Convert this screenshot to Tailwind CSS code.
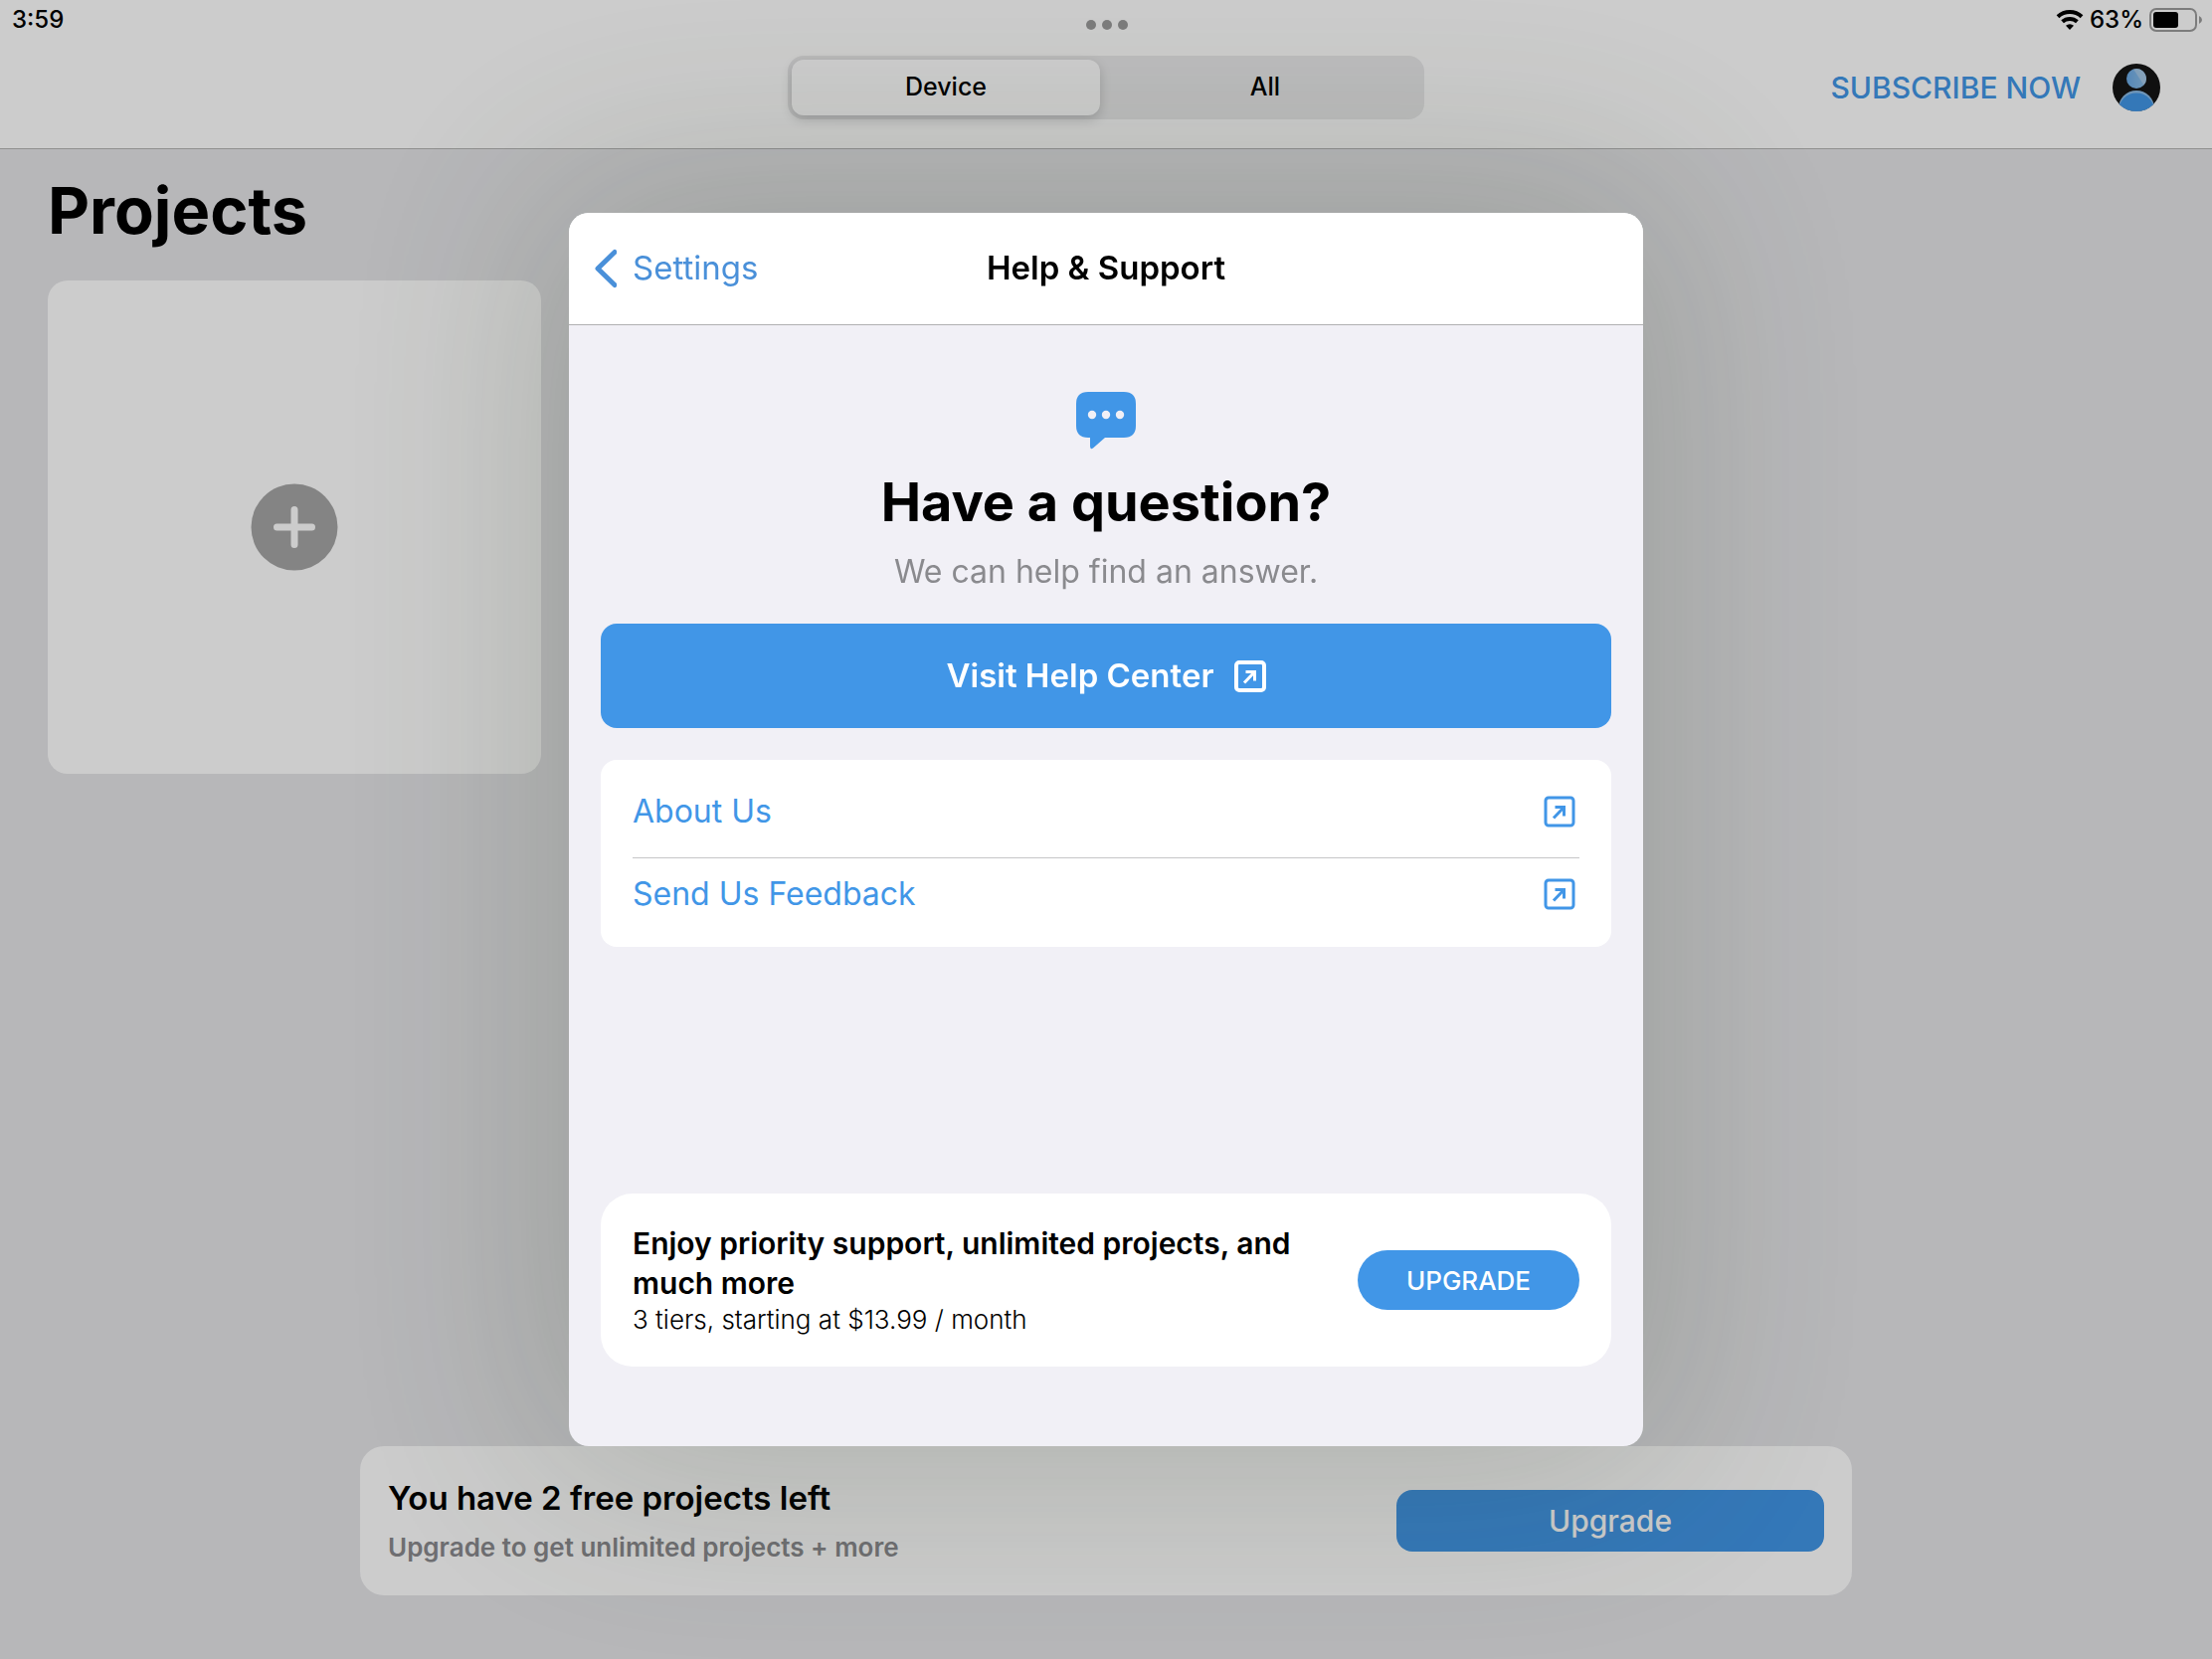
<!DOCTYPE html>
<html lang="en">
<head>
    <meta charset="UTF-8">
    <meta name="viewport" content="width=device-width, initial-scale=1.0">
    <title>Help &amp; Support</title>
    <script src="https://cdn.jsdelivr.net/npm/@tailwindcss/browser@4"></script>
</head>
<body class="min-h-screen flex flex-col bg-[#e5e5e8] text-black font-['Inter',sans-serif] antialiased">

    <!-- Top bar: status line and navigation -->
    <header class="bg-white border-b border-[#b4b4b4] pb-[29px]">
        <div class="grid grid-cols-3 items-center h-10 pl-3 pr-[10px] text-2xl font-medium">
            <span>3:59</span>
            <span class="flex justify-center gap-[6px] pt-[10px]">
                <i class="size-[10px] rounded-full bg-[#9c9c9c]"></i>
                <i class="size-[10px] rounded-full bg-[#9c9c9c]"></i>
                <i class="size-[10px] rounded-full bg-[#9c9c9c]"></i>
            </span>
            <span class="flex items-center justify-end gap-[6px]">
                <svg class="w-7 h-5" viewBox="0 0 28 20" fill="none" stroke="#000" stroke-width="4">
                    <path d="M2 6.8a17.5 17.5 0 0 1 24 0"/>
                    <path d="M6.600 11.800a11 11 0 0 1 14.800 0"/>
                    <path d="M14 20l-4-4.200a6 6 0 0 1 8 0z" fill="#000" stroke="none"/>
                </svg>
                <span>63%</span>
                <svg class="w-[53px] h-6" viewBox="0 0 53 24" fill="none">
                    <rect x="1" y="1" width="46" height="22" rx="6" stroke="#9c9c9c" stroke-width="2"/>
                    <rect x="4" y="4" width="25" height="16" rx="3" fill="#000"/>
                    <path d="M50 8q3 1.500 3 4t-3 4z" fill="#9c9c9c"/>
                </svg>
            </span>
        </div>
        <div class="grid grid-cols-[1fr_640px_1fr] items-center pt-4">
            <div class="col-start-2 grid grid-cols-2 h-16 p-1 rounded-2xl bg-[#ebebec] text-[25px]">
                <button class="mr-[6px] rounded-xl bg-white font-medium shadow-[0_4px_12px_rgba(0,0,0,0.18)]">Device</button>
                <button class="pl-1 font-medium">All</button>
            </div>
            <div class="flex items-center justify-end gap-8 pr-13">
                <a href="#" class="text-[30px] font-medium text-[#4196e7]">SUBSCRIBE NOW</a>
                <button aria-label="Account">
                    <svg class="size-12" viewBox="0 0 48 48">
                        <defs>
                            <clipPath id="avatar"><circle cx="24" cy="24" r="24"/></clipPath>
                            <linearGradient id="face" x1="0" y1="0" x2="1" y2="0">
                                <stop offset="0" stop-color="#6aaae6"/>
                                <stop offset="1" stop-color="#8fbfe8"/>
                            </linearGradient>
                        </defs>
                        <g clip-path="url(#avatar)">
                            <rect width="48" height="48" fill="#151515"/>
                            <circle cx="24" cy="45" r="18" fill="#8abbe6"/>
                            <circle cx="24" cy="47.500" r="18" fill="#4196e7"/>
                            <circle cx="24" cy="15" r="10" fill="url(#face)"/>
                            <path d="M21 5.500a10 10 0 0 1 10.500 16z" fill="#b0cfe8" opacity=".7"/>
                        </g>
                    </svg>
                </button>
            </div>
        </div>
    </header>

    <!-- Project list -->
    <main class="grow px-12 pt-[26px]">
        <h1 class="text-[65px] leading-[72px] font-bold">Projects</h1>
        <div class="mt-[34px] w-[496px]">
            <button class="w-full aspect-square rounded-[20px] bg-white flex items-center justify-center" aria-label="New project">
                <svg class="size-[88px]" viewBox="0 0 88 88">
                    <circle cx="44" cy="44" r="43.500" fill="#a6a6a6"/>
                    <path d="M44 26.500v35M26.500 44h35" stroke="#fff" stroke-width="7" stroke-linecap="round"/>
                </svg>
            </button>
        </div>
    </main>

    <!-- Free plan banner -->
    <footer class="px-12 pb-16">
        <div class="mx-auto max-w-[1500px] flex items-center justify-between rounded-3xl bg-white px-7 py-7">
            <div>
                <p class="text-[33px] leading-12 font-semibold">You have 2 free projects left</p>
                <p class="text-[26px] leading-10 font-semibold text-[#8a8a8e] pt-[6px]">Upgrade to get unlimited projects + more</p>
            </div>
            <button class="w-[430px] h-[62px] rounded-2xl bg-[#4196e7] text-white text-[30px] font-medium">Upgrade</button>
        </div>
    </footer>

    <!-- Dimmed backdrop with the help sheet -->
    <div class="fixed inset-0 flex items-center justify-center bg-black/20">
        <section role="dialog" aria-labelledby="sheet-title" class="w-full max-w-[1080px] min-h-[1240px] flex flex-col rounded-[20px] bg-[#f1f0f6] shadow-[0_0_220px_30px_rgba(50,65,40,0.2)]">
            <div class="grid grid-cols-[1fr_auto_1fr] items-center h-[113px] px-6 rounded-t-[20px] bg-white border-b border-[#b0b0b2] text-[33px]">
                <a href="#" class="flex items-center gap-4 text-[#4a90d9]">
                    <svg class="w-6 h-10" viewBox="0 0 24 40" fill="none" stroke="currentColor" stroke-width="5" stroke-linecap="round" stroke-linejoin="round"><path d="M22 3.500L5 20l17 16.500"/></svg>
                    Settings
                </a>
                <h2 id="sheet-title" class="font-semibold">Help &amp; Support</h2>
            </div>

            <div class="grow flex flex-col px-8 pb-20">
                <div class="flex flex-col items-center pt-[66px]">
                    <svg class="w-[60px] h-[60px]" viewBox="0 0 60 60">
                        <path d="M12 1h36q12 0 12 12v22q0 12-12 12H29L17 57.500q-3 2-3-2V47h-2Q0 47 0 35V13Q0 1 12 1z" fill="#4196e7"/>
                        <g fill="#f1f0f6"><circle cx="16" cy="24" r="4.200"/><circle cx="30" cy="24" r="4.200"/><circle cx="44" cy="24" r="4.200"/></g>
                    </svg>
                    <h3 class="pt-4 text-[54px] leading-[72px] font-bold">Have a question?</h3>
                    <p class="pt-[10px] text-[32px] leading-12 text-[#8a8a8e]">We can help find an answer.</p>
                </div>

                <a href="#" class="mt-7 h-[105px] flex items-center justify-center gap-5 rounded-2xl bg-[#4196e7] text-white text-[33px] font-semibold">
                    Visit Help Center
                    <svg class="size-8" viewBox="0 0 32 32" fill="none" stroke="currentColor" stroke-width="3"><rect x="2" y="2" width="28" height="28" rx="3" stroke-width="4"/><path d="M11.500 11.500h9v9M20.500 11.500l-10.500 11"/></svg>
                </a>

                <ul class="mt-8 px-8 pt-[6px] pb-[17px] rounded-2xl bg-white text-[32px] text-[#4196e7]">
                    <li class="border-b border-[#c6c6c8]">
                        <a href="#" class="h-[92px] flex items-center justify-between pr-1">About Us
                            <svg class="size-8" viewBox="0 0 32 32" fill="none" stroke="currentColor" stroke-width="3"><rect x="2" y="2" width="28" height="28" rx="3"/><path d="M11.500 11.500h9v9M20.500 11.500l-10.500 11"/></svg>
                        </a>
                    </li>
                    <li>
                        <a href="#" class="h-[72px] flex items-center justify-between pr-1">Send Us Feedback
                            <svg class="size-8" viewBox="0 0 32 32" fill="none" stroke="currentColor" stroke-width="3"><rect x="2" y="2" width="28" height="28" rx="3"/><path d="M11.500 11.500h9v9M20.500 11.500l-10.500 11"/></svg>
                        </a>
                    </li>
                </ul>

                <div class="mt-auto flex items-center justify-between gap-12 px-8 py-[30px] rounded-[32px] bg-white">
                    <div>
                        <p class="text-[30px] leading-10 font-semibold">Enjoy priority support, unlimited projects, and much more</p>
                        <p class="text-[26px] leading-[34px] font-light">3 tiers, starting at $13.99 / month</p>
                    </div>
                    <button class="w-[223px] h-[60px] shrink-0 rounded-full bg-[#4196e7] text-white text-[26px] font-medium">UPGRADE</button>
                </div>
            </div>
        </section>
    </div>

</body>
</html>
